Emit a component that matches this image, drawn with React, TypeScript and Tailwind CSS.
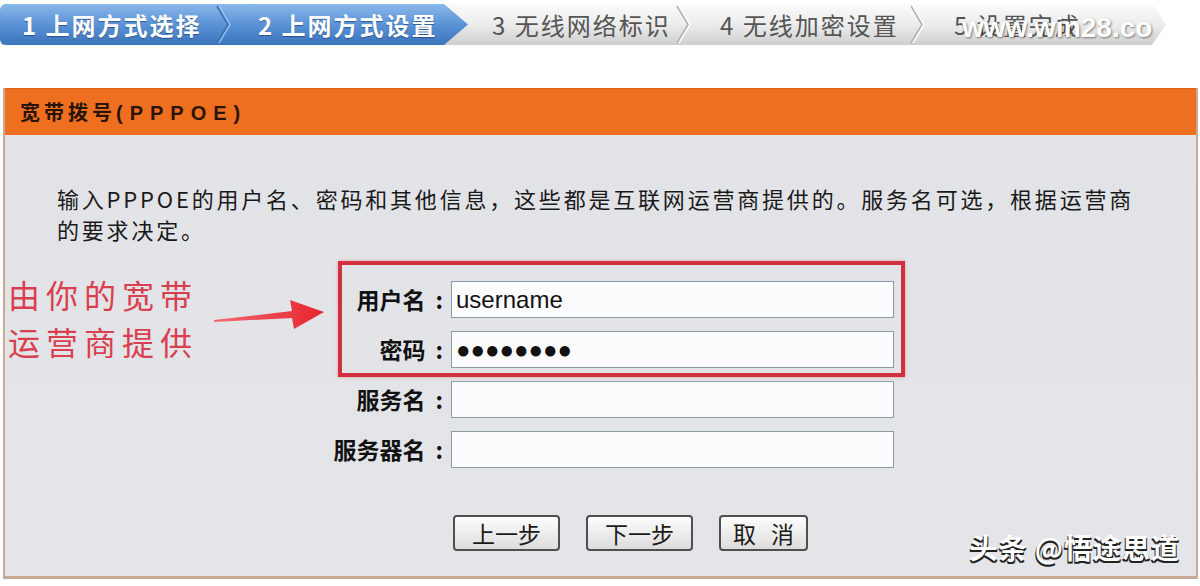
import React from "react";

const cjk = "font-['Noto_Sans_CJK_SC','Noto_Sans',sans-serif]";

function Chevron({ tone }: { tone: "blue" | "gray" }) {
  const dark = tone === "blue" ? "#3a6fb3" : "#b3b3b3";
  const light = tone === "blue" ? "#9cc3ee" : "#ffffff";
  return (
    <svg width="18" height="41" viewBox="0 0 18 41" className="shrink-0">
      <polyline points="3,2 14,20.5 3,39" fill="none" stroke={dark} strokeWidth="1.6" />
      <polyline points="5,2 16,20.5 5,39" fill="none" stroke={light} strokeWidth="1.4" />
    </svg>
  );
}

function Field({ label, value, wide }: { label: string; value?: string; wide?: boolean }) {
  return (
    <div className="flex items-center">
      <div
        className={`${wide ? "w-[131px]" : "w-[109px]"} shrink-0 flex justify-end items-center text-[23px] font-bold text-[#111] whitespace-nowrap`}
      >
        <span>{label}</span>
        <span className="ml-[10px] mr-[8px]">:</span>
      </div>
      <input
        readOnly
        value={value ?? ""}
        className="w-[443px] h-[37px] border border-[#8c9aa5] bg-[#fcfcfe] pl-[4px] text-[24px] text-[#111] font-['Liberation_Sans',sans-serif] outline-none"
      />
    </div>
  );
}

export default function App() {
  const steps = [
    { text: "1 上网方式选择", active: true },
    { text: "2 上网方式设置", active: true },
    { text: "3 无线网络标识", active: false },
    { text: "4 无线加密设置", active: false },
    { text: "5 设置完成", active: false },
  ];

  return (
    <div className={`relative w-[1200px] h-[586px] overflow-hidden bg-white ${cjk}`}>
      {/* Wizard step bar */}
      <div className="relative mt-[4px] w-[1166px] h-[41px] flex rounded-l-[6px] bg-gradient-to-b from-[#fbfbfb] via-[#ececec] to-[#cfcfcf] shadow-[0_1px_1px_rgba(0,0,0,0.25)] [clip-path:polygon(0_0,calc(100%-14px)_0,100%_50%,calc(100%-14px)_100%,0_100%)]">
        <div className="flex h-full w-[468px] shrink-0 rounded-l-[6px] bg-gradient-to-b from-[#8ab8ea] via-[#5b93d6] to-[#3b74bd] [clip-path:polygon(0_0,calc(100%-24px)_0,100%_50%,calc(100%-24px)_100%,0_100%)]">
          {steps.slice(0, 2).map((s, i) => (
            <div key={s.text} className="flex items-center w-[234px] h-full">
              <span className={`${i === 0 ? "pl-[22px]" : "pl-[24px]"} text-[24px] font-bold tracking-[2px] text-white [text-shadow:0_1px_1px_rgba(20,50,100,0.6)] whitespace-nowrap`}>
                {s.text}
              </span>
              {i === 0 && <div className="ml-auto mr-[2px]"><Chevron tone="blue" /></div>}
            </div>
          ))}
        </div>
        {steps.slice(2).map((s, i) => (
          <div key={s.text} className={`flex items-center ${i === 0 ? "w-[226px] pl-[24px]" : "w-[234px] pl-[26px]"} h-full`}>
            <span className="text-[24px] tracking-[2px] text-[#555] whitespace-nowrap">{s.text}</span>
            {i < 2 && <div className="ml-auto mr-[2px]"><Chevron tone="gray" /></div>}
          </div>
        ))}
        {/* site watermark over the last step */}
        <div className="absolute left-[962px] top-[3px] text-[28px] font-bold text-white font-['Liberation_Sans',sans-serif] [text-shadow:1px_1px_2px_rgba(0,0,0,0.45)]">
          www.win28.co
        </div>
      </div>

      {/* Panel */}
      <div className="mt-[43px] ml-[3px] w-[1195px] border-x-2 border-b-[3px] border-[#c7a994]">
        <div className="h-[47px] flex items-center pl-[15px] bg-[#ee6f1f] border-t border-[#d9631b]">
          <span className="text-[20px] font-bold text-[#2a1406] tracking-[4px]">
            宽带拨号<span className="tracking-[7px] font-['Liberation_Sans',sans-serif]">(PPPOE)</span>
          </span>
        </div>

        <div className="relative bg-gradient-to-b from-[#e2e3e7] to-[#e4e5e8] pt-[48px] pb-[25px]">
          <p className="pl-[52px] pr-[48px] text-[22px] leading-[31px] tracking-[2.8px] text-[#1a1a1a]">
            输入PPPOE的用户名、密码和其他信息，这些都是互联网运营商提供的。服务名可选，根据运营商的要求决定。
          </p>

          <div className="ml-[315px] mt-[16px] flex flex-col">
            <div className="ml-[18px] w-[567px] border-4 border-[#d3303f] pt-[16px] pb-[5px] flex flex-col gap-[13px] shadow-[0_0_3px_rgba(230,80,90,0.5)]">
              <Field label="用户名" value="username" />
              <Field label="密码" value="●●●●●●●●" />
            </div>
            <div className="mt-[4px] flex flex-col gap-[13px]">
              <Field label="服务名" wide />
              <Field label="服务器名" wide />
            </div>
          </div>

          <div className="mt-[47px] pl-[448px] flex gap-[26px]">
            {["上一步", "下一步", "取 消"].map((b) => (
              <button
                key={b}
                className={`${b === "取 消" ? "w-[89px] [word-spacing:10px]" : "w-[107px]"} h-[36px] border-2 border-[#4f4f4f] rounded-[4px] bg-gradient-to-b from-[#fdfdfd] to-[#dcdcdc] text-[23px] leading-none text-[#1a1a1a]`}
              >
                {b}
              </button>
            ))}
          </div>

          {/* Annotation */}
          <div className="absolute left-[3px] top-[136px] text-[32px] leading-[47px] tracking-[6px] text-[#d9404f]">
            <div>由你的宽带</div>
            <div>运营商提供</div>
          </div>
          <svg className="absolute left-[205px] top-[161px]" width="116" height="36" viewBox="0 0 116 36">
            <defs>
              <linearGradient id="arr" x1="0" x2="1" y1="0" y2="0">
                <stop offset="0" stopColor="#f06a6f" />
                <stop offset="1" stopColor="#e8242f" />
              </linearGradient>
            </defs>
            <path d="M4 24 L82 15 L80 4 L114 16 L84 33 L82 22 L4 26 Z" fill="url(#arr)" />
          </svg>

          {/* Watermark */}
          <div className="absolute right-[16px] bottom-[8px] text-[28px] font-bold text-white tracking-[1px] [text-shadow:-1px_2px_0_#222,1px_2px_0_#222]">
            头条 @悟途思道
          </div>
        </div>
      </div>
    </div>
  );
}
